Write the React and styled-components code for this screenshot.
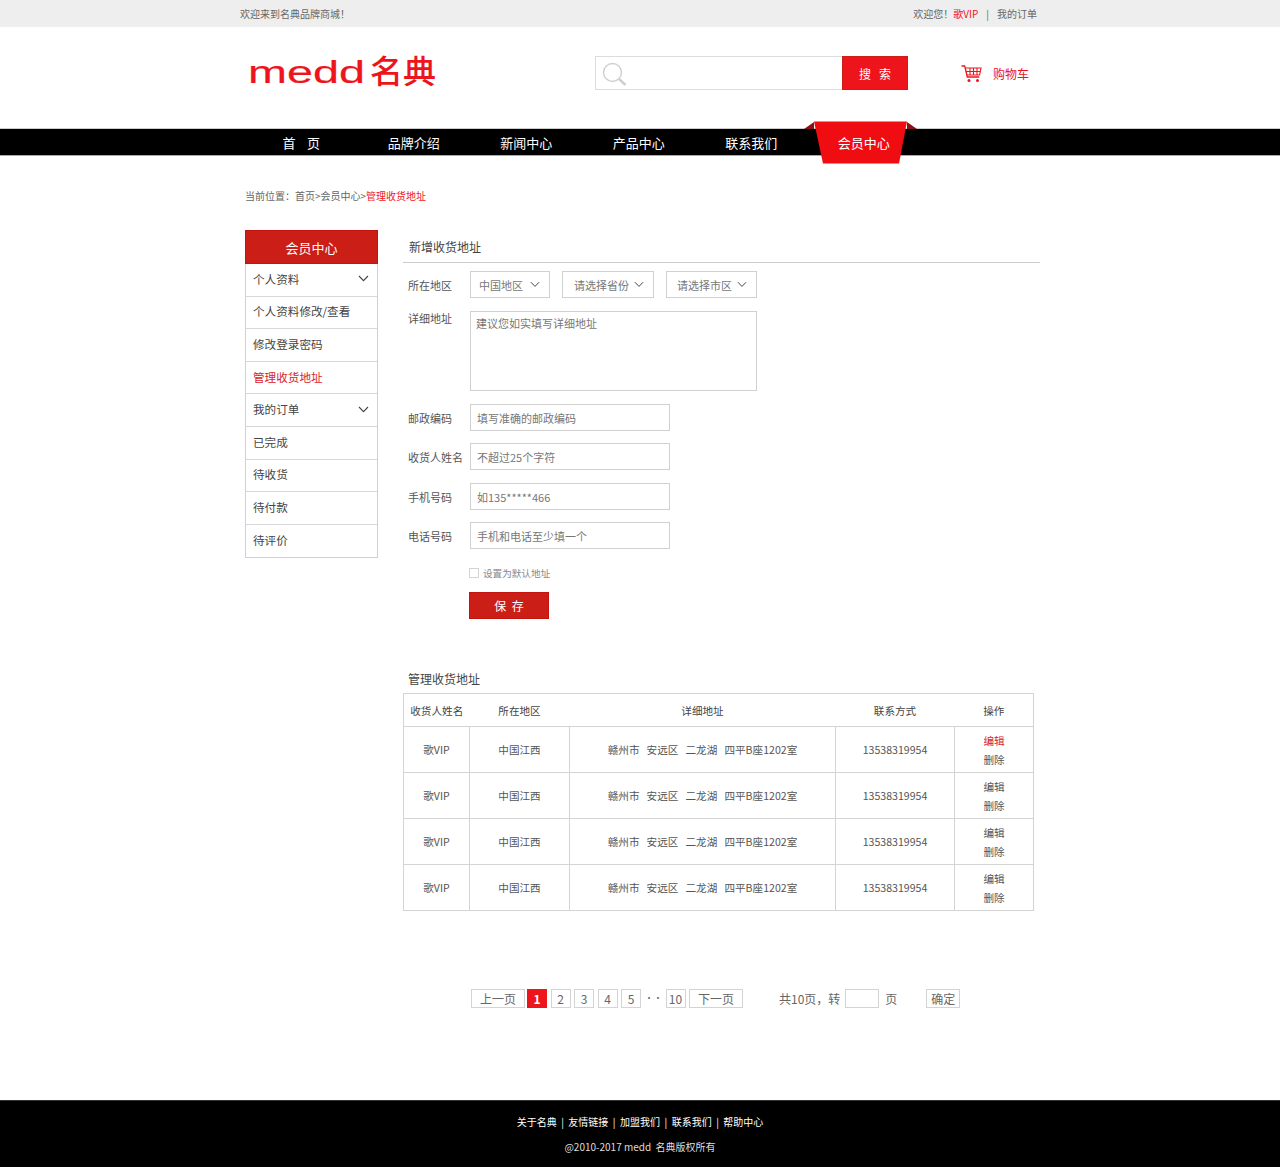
import React from "react";
import styled, { createGlobalStyle } from "styled-components";

const Global = createGlobalStyle`
  html, body { margin: 0; padding: 0; background: #fff; }
  body { font-family: "Noto Sans CJK SC", "Noto Sans", sans-serif; color: #555; }
  * { box-sizing: border-box; }
  input, textarea, button { font-family: inherit; }
`;

const red = "#ee141b";
const dark = "#cb1e17";

const Page = styled.div`width: 1280px; min-height: 1167px; display: flex; flex-direction: column;`;
const Wrap = styled.div`width: 800px; margin: 0 auto;`;

const TopBar = styled.div`height: 27px; background: #eee; font-size: 10px; line-height: 27px; color: #666;`;
const TopInner = styled(Wrap)`display: flex; justify-content: space-between; padding-right: 3px;`;
const TopRight = styled.div`display: flex;`;
const Vip = styled.span`color: ${red};`;
const TopSep = styled.span`margin: 0 8px 0 8px;`;

const Header = styled.header`height: 101px;`;
const HeaderInner = styled(Wrap)`height: 100%; display: flex; align-items: flex-start;`;
const LogoSvg = styled.svg`display: block; width: 190px; height: 40px; margin: 25px 0 0 8px; flex: none;`;
const SearchBox = styled.div`display: flex; width: 313px; height: 34px; margin: 29px 0 0 157px; flex: none;`;
const SearchField = styled.div`width: 247px; border: 1px solid #dcdcdc; border-right: 0; padding: 5px 0 0 6px;`;
const SearchBtn = styled.button`width: 66px; border: 1px solid ${dark}; background: ${red}; color: #fff; font-size: 12px; letter-spacing: 0; padding: 0; word-spacing: 0;`;
const Cart = styled.div`display: flex; align-items: center; margin: 37px 0 0 53px; color: ${red}; font-size: 12px; line-height: 20px; gap: 11px;`;

const Nav = styled.nav`height: 28px; background: #000; border-top: 1px solid #ccc; border-bottom: 1px solid #aaa;`;
const NavInner = styled(Wrap)`display: flex; padding-left: 5px; height: 100%;`;
const NavItem = styled.a`position: relative; width: 112.5px; flex: none; text-align: center; color: #fff; font-size: 13px; line-height: 27px; white-space: pre;`;
const NavFlag = styled.svg`position: absolute; left: -4px; top: -8px; width: 114px; height: 43px;`;
const NavLabel = styled.span`position: relative;`;

const Crumb = styled.div`margin: 33px 0 0 5px; font-size: 10px; line-height: 14px; color: #666;`;
const CrumbNow = styled.span`color: #f0141b;`;

const Content = styled.div`display: flex; align-items: flex-start; margin: 27px 0 0 5px; gap: 25px;`;
const Side = styled.aside`width: 133px; flex: none;`;
const SideTitle = styled.div`height: 34px; background: ${dark}; border: 1px solid #c4140f; color: #fff; font-size: 13px; line-height: 33px; text-align: center;`;
const SideList = styled.div`border: 1px solid #d0d0d0; border-top: 0; display: grid; grid-auto-rows: 32.6px;`;
const SideRow = styled.a`display: flex; align-items: center; justify-content: space-between; padding: 0 8px 2px 7px; font-size: 11.6px; color: ${p => (p.$active ? "#d8232a" : "#444")}; border-bottom: 1px solid #d8d8d8; &:last-child { border-bottom: 0; }`;
const Chevron = styled.svg`display: block; flex: none; width: ${p => p.$w || 11}px; height: 7px;`;

const Main = styled.main`width: 637px; flex: none;`;
const MainTitle = styled.div`height: 33px; padding-left: 6px; border-bottom: 1px solid #ccc; font-size: 12px; line-height: 34px; color: #444;`;

const Form = styled.form`padding-left: 5px;`;
const Row = styled.div`display: flex; align-items: ${p => (p.$top ? "flex-start" : "center")}; margin-top: ${p => p.$mt}px; gap: ${p => p.$gap || 0}px;`;
const Label = styled.label`width: 62px; flex: none; font-size: 11px; line-height: 14px; color: #555; white-space: nowrap; margin-left: 0;`;
const Selects = styled.div`display: flex; gap: 12px;`;
const Select = styled.div`display: flex; align-items: center; justify-content: space-between; width: ${p => p.$w}px; height: 27px; padding: 0 9px 0 ${p => p.$pl}px; border: 1px solid #d0d0d0; font-size: 11px; color: #777;`;
const TextArea = styled.textarea`display: block; width: 287px; height: 80px; padding: 4px 5px; border: 1px solid #d0d0d0; border-radius: 0; resize: none; outline: 0; font-size: 11px; line-height: 14px; &::placeholder { color: #777; opacity: 1; }`;
const Input = styled.input`display: block; width: 200px; height: 27px; padding: 0 6px; border: 1px solid #d0d0d0; border-radius: 0; outline: 0; font-size: 11px; &::placeholder { color: #777; opacity: 1; }`;
const Check = styled.span`display: block; width: 10px; height: 10px; border: 1px solid #d4d4d4; margin-left: 61px; flex: none;`;
const CheckText = styled.span`margin-left: 4px; font-size: 9.6px; line-height: 12px; color: #888;`;
const SaveBtn = styled.button`display: block; width: 80px; height: 27px; margin: 13px 0 0 61px; padding: 0; border: 1px solid #c4140f; background: ${dark}; color: #fff; font-size: 12px; letter-spacing: 0; white-space: pre;`;

const Sub = styled.div`margin: 52px 0 0 5px; font-size: 12px; line-height: 16px; color: #444;`;
const Table = styled.table`width: 630px; margin-top: 6px; border-collapse: collapse; table-layout: fixed; font-size: 10.6px; color: #555;`;
const Col = styled.col`width: ${p => p.$w}px;`;
const Th = styled.th`height: 33px; font-weight: 400; text-align: center; padding: 0; color: #444; border-top: 1px solid #d4d4d4; border-bottom: 1px solid #d4d4d4; &:first-child { border-left: 1px solid #d4d4d4; } &:last-child { border-right: 1px solid #d4d4d4; }`;
const Td = styled.td`height: 46px; padding: 0; text-align: center; border: 1px solid #d4d4d4; line-height: 19px; white-space: pre;`;
const Op = styled.div`color: ${p => (p.$active ? "#d8232a" : "#555")};`;

const Pager = styled.div`display: flex; align-items: center; margin: 77px 0 0 68px; gap: 3.5px; font-size: 12px; color: #666; height: 20px;`;
const PageBtn = styled.a`display: block; flex: none; width: ${p => p.$w || 20}px; height: 19px; margin-right: ${p => p.$mr || 0}px; border: 1px solid ${p => (p.$active ? red : "#d4d4d4")}; background: ${p => (p.$active ? red : "#fff")}; color: ${p => (p.$active ? "#fff" : "#666")}; font-weight: ${p => (p.$active ? 700 : 400)}; line-height: 17px; text-align: center;`;
const Dots = styled.span`width: 17.5px; flex: none; text-align: center; font-size: 9px; letter-spacing: 0; line-height: 14px; white-space: nowrap; overflow: hidden;`;
const PagerText = styled.span`flex: none; margin-left: ${p => p.$ml || 0}px; white-space: nowrap;`;
const PagerInput = styled.input`display: block; width: 34px; height: 19px; margin-left: 1.5px; padding: 0; border: 1px solid #d4d4d4; border-radius: 0; outline: 0;`;

const Footer = styled.footer`margin-top: auto; height: 67px; background: #000; border-top: 1px solid #333; color: #fff; font-size: 10px; text-align: center; padding-top: 14px; line-height: 14px;`;
const FootLinks = styled.div`white-space: pre;`;
const FootCopy = styled.div`margin-top: 11px; color: #ddd; white-space: pre;`;

const Down = ({ w }) => (
  <Chevron $w={w} viewBox="0 0 11 7" fill="none" stroke="#444" strokeWidth="1.1"><path d="M1 1l4.5 4.6L10 1" /></Chevron>
);

const Addr = "赣州市   安远区   二龙湖   四平B座1202室";

export default function App() {
  const rows = [0, 1, 2, 3];
  return (
    <Page>
      <Global />
      <TopBar>
        <TopInner>
          <span>欢迎来到名典品牌商城！</span>
          <TopRight>
            <span>欢迎您！</span><Vip>歌VIP</Vip><TopSep>|</TopSep><span>我的订单</span>
          </TopRight>
        </TopInner>
      </TopBar>
      <Header>
        <HeaderInner>
          <LogoSvg viewBox="0 0 190 40" aria-label="medd 名典">
            <text x="0" y="31" fontFamily="'Liberation Sans', sans-serif" fontSize="31" fill={red} stroke={red} strokeWidth="0.2" textLength="117" lengthAdjust="spacingAndGlyphs">medd</text>
            <text x="122" y="31" fontFamily="'Noto Sans CJK SC', sans-serif" fontSize="32" fontWeight="500" fill={red} textLength="66" lengthAdjust="spacingAndGlyphs">名典</text>
          </LogoSvg>
          <SearchBox>
            <SearchField>
              <svg width="26" height="26" viewBox="0 0 26 26" fill="none" stroke="#cfcfcf" style={{ display: "block" }}>
                <circle cx="10.5" cy="10.5" r="9" strokeWidth="1.4" />
                <path d="M17 17l6.5 6" strokeWidth="2.4" />
              </svg>
            </SearchField>
            <SearchBtn>搜&nbsp;&nbsp;&nbsp;索</SearchBtn>
          </SearchBox>
          <Cart>
            <svg width="21" height="18" viewBox="0 0 21 18" fill="none" stroke={red}>
              <path d="M0.5 1h3.2l2.6 11h12" strokeWidth="1.3" />
              <path d="M4 3h16l-1.4 7H5.8M4.8 6.5H19.5M9 3v7M12.5 3v7M16 3v7" strokeWidth="1.1" />
              <circle cx="8" cy="15.5" r="1.5" fill={red} stroke="none" />
              <circle cx="16.5" cy="15.5" r="1.5" fill={red} stroke="none" />
            </svg>
            <span>购物车</span>
          </Cart>
        </HeaderInner>
      </Header>
      <Nav>
        <NavInner>
          <NavItem>首    页</NavItem>
          <NavItem>品牌介绍</NavItem>
          <NavItem>新闻中心</NavItem>
          <NavItem>产品中心</NavItem>
          <NavItem>联系我们</NavItem>
          <NavItem>
            <NavFlag viewBox="0 0 114 43">
              <path d="M0 8L10 1v7zM113 8L103 1v7z" fill="#8c1015" />
              <path d="M10 0.5h93l-8 42H19z" fill="#f00d12" />
            </NavFlag>
            <NavLabel>会员中心</NavLabel>
          </NavItem>
        </NavInner>
      </Nav>
      <Wrap>
        <Crumb>当前位置：首页&gt;会员中心&gt;<CrumbNow>管理收货地址</CrumbNow></Crumb>
        <Content>
          <Side>
            <SideTitle>会员中心</SideTitle>
            <SideList>
              <SideRow>个人资料<Down /></SideRow>
              <SideRow>个人资料修改/查看</SideRow>
              <SideRow>修改登录密码</SideRow>
              <SideRow $active>管理收货地址</SideRow>
              <SideRow>我的订单<Down /></SideRow>
              <SideRow>已完成</SideRow>
              <SideRow>待收货</SideRow>
              <SideRow>待付款</SideRow>
              <SideRow>待评价</SideRow>
            </SideList>
          </Side>
          <Main>
            <MainTitle>新增收货地址</MainTitle>
            <Form>
              <Row $mt={8}>
                <Label>所在地区</Label>
                <Selects>
                  <Select $w={80} $pl={8}>中国地区<Down w={10} /></Select>
                  <Select $w={92} $pl={11}>请选择省份<Down w={10} /></Select>
                  <Select $w={91} $pl={10}>请选择市区<Down w={10} /></Select>
                </Selects>
              </Row>
              <Row $mt={13} $top>
                <Label>详细地址</Label>
                <TextArea placeholder="建议您如实填写详细地址" />
              </Row>
              <Row $mt={13}><Label>邮政编码</Label><Input placeholder="填写准确的邮政编码" /></Row>
              <Row $mt={12}><Label>收货人姓名</Label><Input placeholder="不超过25个字符" /></Row>
              <Row $mt={13}><Label>手机号码</Label><Input placeholder="如135*****466" /></Row>
              <Row $mt={12}><Label>电话号码</Label><Input placeholder="手机和电话至少填一个" /></Row>
              <Row $mt={18}><Check /><CheckText>设置为默认地址</CheckText></Row>
              <SaveBtn type="button">保  存</SaveBtn>
            </Form>
            <Sub>管理收货地址</Sub>
            <Table>
              <colgroup>
                <Col $w={66} /><Col $w={100} /><Col $w={266} /><Col $w={119} /><Col $w={79} />
              </colgroup>
              <thead>
                <tr><Th>收货人姓名</Th><Th>所在地区</Th><Th>详细地址</Th><Th>联系方式</Th><Th>操作</Th></tr>
              </thead>
              <tbody>
                {rows.map(i => (
                  <tr key={i}>
                    <Td>歌VIP</Td>
                    <Td>中国江西</Td>
                    <Td>{Addr}</Td>
                    <Td>13538319954</Td>
                    <Td><Op $active={i === 0}>编辑</Op><Op>删除</Op></Td>
                  </tr>
                ))}
              </tbody>
            </Table>
            <Pager>
              <PageBtn $w={54} $mr={-1.5}>上一页</PageBtn>
              <PageBtn $active>1</PageBtn>
              <PageBtn>2</PageBtn>
              <PageBtn>3</PageBtn>
              <PageBtn>4</PageBtn>
              <PageBtn>5</PageBtn>
              <Dots>······</Dots>
              <PageBtn>10</PageBtn>
              <PageBtn $w={54}>下一页</PageBtn>
              <PagerText $ml={32.5}>共10页，转</PagerText>
              <PagerInput />
              <PagerText $ml={2.5}>页</PagerText>
              <PageBtn $w={34} style={{ marginLeft: 25.5 }}>确定</PageBtn>
            </Pager>
          </Main>
        </Content>
      </Wrap>
      <Footer>
        <FootLinks>关于名典  |  友情链接  |  加盟我们  |  联系我们  |  帮助中心</FootLinks>
        <FootCopy>@2010-2017 medd  名典版权所有</FootCopy>
      </Footer>
    </Page>
  );
}
